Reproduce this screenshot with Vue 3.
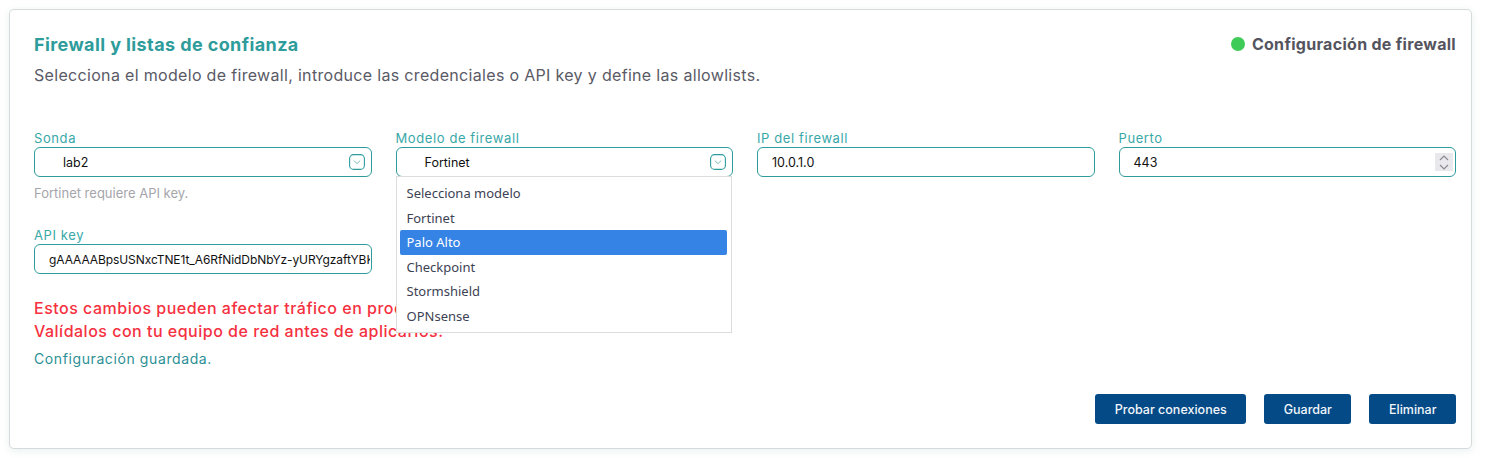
<script setup>
const modelos = ["Selecciona modelo", "Fortinet", "Palo Alto", "Checkpoint", "Stormshield", "OPNsense"];
const activo = "Palo Alto";
const apiKey = "gAAAAABpsUSNxcTNE1t_A6RfNidDbNbYz-yURYgzaftYBKq3vLm";
</script>

<template>
  <div class="page">
    <section class="card">
      <header class="head">
        <div>
          <h2 class="title">Firewall y listas de confianza</h2>
          <p class="subtitle">Selecciona el modelo de firewall, introduce las credenciales o API key y define las allowlists.</p>
        </div>
        <div class="status">
          <span class="dot"></span>
          <span>Configuración de firewall</span>
        </div>
      </header>

      <div class="grid">
        <div class="field">
          <label>Sonda</label>
          <div class="control select">
            <span>lab2</span>
            <svg class="chev" width="16" height="16" viewBox="0 0 16 16">
              <rect x="0.6" y="0.6" width="14.8" height="14.8" rx="4" fill="none" stroke="#2f9c9c" stroke-width="1.1" />
              <path d="M4.8 6.6 8 9.6l3.2-3" fill="none" stroke="#7dbcbc" stroke-width="1" />
            </svg>
          </div>
          <p class="hint">Fortinet requiere API key.</p>
        </div>

        <div class="field">
          <label>Modelo de firewall</label>
          <div class="control select">
            <span>Fortinet</span>
            <svg class="chev" width="16" height="16" viewBox="0 0 16 16">
              <rect x="0.6" y="0.6" width="14.8" height="14.8" rx="4" fill="none" stroke="#2f9c9c" stroke-width="1.1" />
              <path d="M4.8 6.6 8 9.6l3.2-3" fill="none" stroke="#7dbcbc" stroke-width="1" />
            </svg>
            <ul class="menu">
              <li v-for="m in modelos" :key="m" :class="{ active: m === activo }">{{ m }}</li>
            </ul>
          </div>
        </div>

        <div class="field">
          <label>IP del firewall</label>
          <div class="control plain">10.0.1.0</div>
        </div>

        <div class="field">
          <label>Puerto</label>
          <div class="control plain port">
            <span>443</span>
            <span class="spin">
              <svg width="10" height="6" viewBox="0 0 10 6"><path d="M1 5 5 1l4 4" fill="none" stroke="#8a8a90" stroke-width="1.2" /></svg>
              <svg width="10" height="6" viewBox="0 0 10 6"><path d="M1 1l4 4 4-4" fill="none" stroke="#8a8a90" stroke-width="1.2" /></svg>
            </span>
          </div>
        </div>

        <div class="field api">
          <label>API key</label>
          <input class="control key" type="text" readonly :value="apiKey" />
        </div>
      </div>

      <p class="warning">Estos cambios pueden afectar tráfico en producción.<br />Valídalos con tu equipo de red antes de aplicarlos.</p>
      <p class="saved">Configuración guardada.</p>

      <div class="actions">
        <button type="button">Probar conexiones</button>
        <button type="button">Guardar</button>
        <button type="button">Eliminar</button>
      </div>
    </section>
  </div>
</template>

<style scoped>
.page {
  padding: 9px 18px 9px 9px;
  font-family: Inter, "Liberation Sans", sans-serif;
}

.card {
  box-sizing: border-box;
  height: 440px;
  padding: 24px 15px 24px 24px;
  background: #fff;
  border: 1px solid #d5dadb;
  border-radius: 5px;
  box-shadow: 0 2px 8px rgba(40, 110, 110, 0.1);
}

.head {
  display: flex;
  justify-content: space-between;
  align-items: flex-start;
  height: 95px;
}

.title {
  margin: 0;
  font-size: 18px;
  line-height: 22px;
  font-weight: 700;
  letter-spacing: 0.4px;
  color: #2f9c9c;
}

.subtitle {
  margin: 8px 0 0;
  font-size: 16px;
  line-height: 22px;
  letter-spacing: 0.32px;
  color: #5a5a66;
}

.status {
  display: flex;
  align-items: center;
  gap: 7px;
  height: 22px;
  margin-top: -1px;
  font-size: 16px;
  font-weight: 700;
  letter-spacing: 0.3px;
  color: #54545e;
}

.dot {
  width: 14px;
  height: 14px;
  border-radius: 50%;
  background: #3fcb57;
}

.grid {
  display: grid;
  grid-template-columns: repeat(4, minmax(0, 1fr));
  column-gap: 24px;
}

.field {
  min-height: 97px;
  min-width: 0;
}

.field label {
  display: block;
  height: 18px;
  font-size: 13px;
  line-height: 18px;
  letter-spacing: 0.6px;
  color: #38a8a8;
}

.control {
  position: relative;
  box-sizing: border-box;
  height: 30px;
  display: flex;
  align-items: center;
  border: 1px solid #2f9c9c;
  border-radius: 6px;
  background: #fff;
  font-size: 12.5px;
  color: #111;
}

.select {
  padding-left: 28px;
}

.plain {
  padding-left: 14px;
}

.chev {
  position: absolute;
  right: 6px;
  top: 6px;
}

.hint {
  margin: 8px 0 0;
  font-size: 13px;
  line-height: 16px;
  color: #a5a5ab;
}

.menu {
  position: absolute;
  z-index: 2;
  top: 28px;
  left: -1px;
  right: 0;
  box-sizing: border-box;
  margin: 0;
  padding: 4px 4px 4px 3px;
  list-style: none;
  background: #fff;
  border: 1px solid #dcdcdc;
  font-family: "Noto Sans", sans-serif;
  font-size: 13px;
  color: #3c4254;
}

.menu li {
  height: 24.5px;
  line-height: 24.5px;
  padding-left: 7px;
  border-radius: 2px;
}

.menu li.active {
  background: #3583e4;
  color: #fff;
}

.port {
  justify-content: space-between;
}

.spin {
  display: flex;
  flex-direction: column;
  align-items: center;
  justify-content: center;
  gap: 3px;
  width: 18px;
  height: 18px;
  margin-right: 2px;
  background: #e9e9ed;
}

.key {
  width: 100%;
  margin: 0;
  padding: 0 1px 0 14px;
  outline: none;
  font-family: inherit;
  font-size: 12px;
  letter-spacing: -0.08px;
}

.api {
  min-height: 0;
}

.warning {
  margin: 23px 0 0;
  font-size: 16px;
  line-height: 23px;
  font-weight: 500;
  letter-spacing: 0.5px;
  color: #f5313f;
}

.saved {
  margin: 5px 0 0;
  font-size: 14px;
  line-height: 22px;
  letter-spacing: 0.6px;
  color: #2d8f95;
}

.actions {
  display: flex;
  justify-content: flex-end;
  gap: 18px;
  margin-top: 24px;
}

.actions button {
  height: 30px;
  padding: 0 19.5px;
  border: none;
  border-radius: 3px;
  background: #034a87;
  color: #f2f6fa;
  font-family: inherit;
  font-size: 12.5px;
  font-weight: 500;
}
</style>
